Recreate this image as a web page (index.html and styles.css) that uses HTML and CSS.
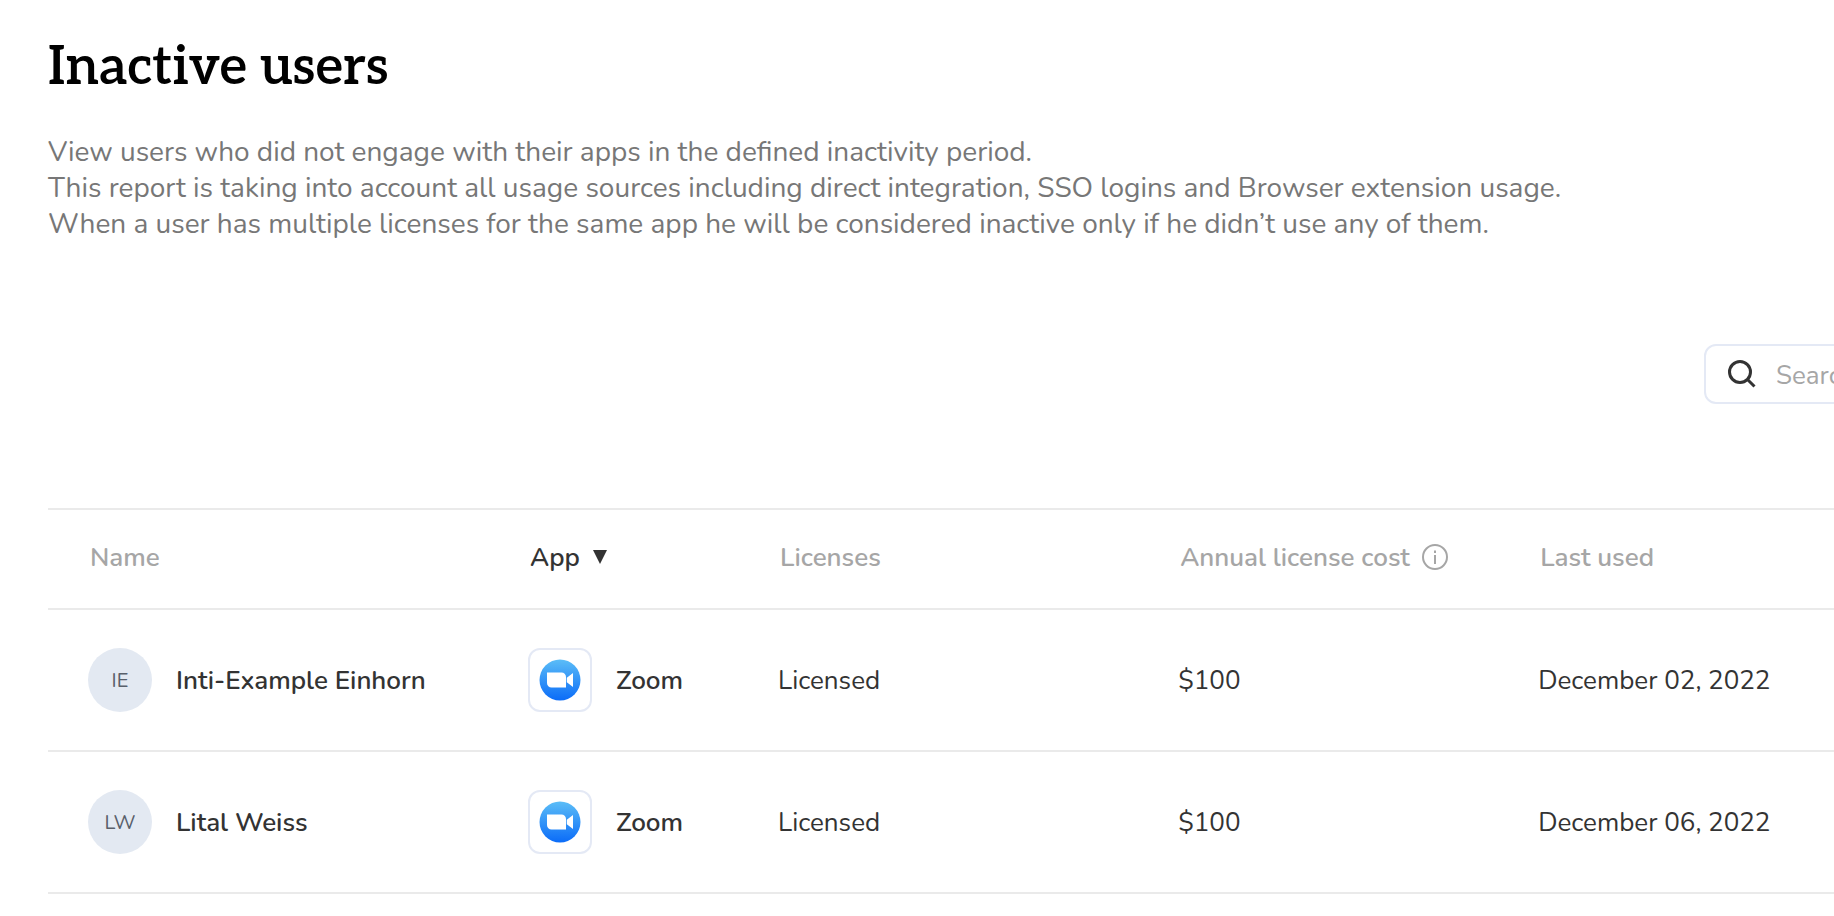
FILE: index.html
```html
<!DOCTYPE html>
<html lang="en">
<head>
<meta charset="utf-8">
<title>Inactive users</title>
<link rel="stylesheet" href="styles.css">
</head>
<body>
<svg class="defs" aria-hidden="true">
  <defs>
    <linearGradient id="zoom-blue" x1="0" y1="0" x2="0" y2="1">
      <stop offset="0" stop-color="#5bbdf7"/>
      <stop offset="1" stop-color="#0b6cf8"/>
    </linearGradient>
    <symbol id="zoom-logo" viewBox="0 0 42 42">
      <circle cx="21" cy="21" r="20.5" fill="url(#zoom-blue)"/>
      <path fill="#fff" d="M8 13.5h14.5a4.5 4.5 0 0 1 4.500 4.500v10.500h-14.500a4.500 4.500 0 0 1-4.500-4.500zM27.800 18.700l6.200-4.700v14l-6.200-4.700z"/>
    </symbol>
  </defs>
</svg>
<main class="page">
  <h1 class="title">Inactive users</h1>
  <p class="intro">View users who did not engage with their apps in the defined inactivity period.<br>This report is taking into account all usage sources including direct integration, SSO logins and Browser extension usage.<br>When a user has multiple licenses for the same app he will be considered inactive only if he didn’t use any of them.</p>
  <div class="toolbar">
    <label class="search">
      <svg class="search-icon" viewBox="0 0 28 28" aria-hidden="true"><circle cx="12" cy="12" r="10.500"/><path d="M19.500 19.500l7 7"/></svg>
      <input class="search-input" type="search" placeholder="Search" aria-label="Search">
    </label>
  </div>
  <table class="table">
    <colgroup><col class="col-name"><col class="col-app"><col class="col-licenses"><col class="col-cost"><col></colgroup>
    <thead>
      <tr>
        <th>Name</th>
        <th class="sorted" aria-sort="descending"><button class="sort" type="button">App <svg class="arrow" viewBox="0 0 14 14" aria-hidden="true"><path d="M0 0h14l-7 14z"/></svg></button></th>
        <th>Licenses</th>
        <th><span class="with-info">Annual license cost <svg class="info" viewBox="0 0 26 26" aria-hidden="true"><circle cx="13" cy="13" r="12"/><path d="M13 11v9M13 6.500v2.500"/></svg></span></th>
        <th>Last used</th>
      </tr>
    </thead>
    <tbody>
      <tr>
        <td><div class="cell"><span class="avatar">IE</span><span class="strong">Inti-Example Einhorn</span></div></td>
        <td><div class="cell"><span class="app-icon"><svg class="logo" aria-hidden="true"><use href="#zoom-logo"/></svg></span><span class="strong">Zoom</span></div></td>
        <td>Licensed</td>
        <td>$100</td>
        <td>December 02, 2022</td>
      </tr>
      <tr>
        <td><div class="cell"><span class="avatar">LW</span><span class="strong">Lital Weiss</span></div></td>
        <td><div class="cell"><span class="app-icon"><svg class="logo" aria-hidden="true"><use href="#zoom-logo"/></svg></span><span class="strong">Zoom</span></div></td>
        <td>Licensed</td>
        <td>$100</td>
        <td>December 06, 2022</td>
      </tr>
    </tbody>
  </table>
</main>
</body>
</html>
```

FILE: styles.css
```css
* {
  box-sizing: border-box;
}

body {
  margin: 0;
  background: #fff;
  color: #333;
  font-family: Nunito, Lato, sans-serif;
  font-size: 26px;
}

.defs {
  position: absolute;
  width: 0;
  height: 0;
}

.page {
  padding: 38px 0 0 48px;
  overflow: hidden;
}

.title {
  margin: 0;
  color: #000;
  font-family: Aleo, "DejaVu Serif", serif;
  font-size: 53px;
  font-weight: 600;
  line-height: 60px;
}

.intro {
  margin: 36px 0 0;
  color: #777;
  font-size: 28px;
  line-height: 36px;
}

.toolbar {
  display: flex;
  justify-content: flex-end;
  margin-top: 102px;
}

/* The search field runs past the right edge of the viewport. */
.search {
  display: flex;
  align-items: center;
  gap: 20px;
  flex: 0 0 500px;
  height: 60px;
  margin-right: -370px;
  padding: 0 22px;
  border: 2px solid #e4e9f5;
  border-radius: 12px;
}

.search-icon {
  width: 28px;
  height: 28px;
  fill: none;
  stroke: #333;
  stroke-width: 3;
}

.search-input {
  flex: 1;
  min-width: 0;
  padding: 2px 0 0;
  border: 0;
  outline: 0;
  background: none;
  color: #333;
  font: inherit;
}

.search-input::placeholder {
  color: #a6a6a6;
}

.table {
  width: 100%;
  margin-top: 104px;
  border-collapse: separate;
  border-spacing: 0;
  border-top: 2px solid #eaeaea;
  table-layout: fixed;
}

.col-name {
  width: 24.64%;
}

.col-app {
  width: 14%;
}

.col-licenses {
  width: 22.4%;
}

.col-cost {
  width: 20.16%;
}

th,
td {
  border-bottom: 2px solid #eaeaea;
  text-align: left;
  vertical-align: middle;
  white-space: nowrap;
}

th {
  height: 100px;
  padding: 0 0 4px 42px;
  color: #a6a6a6;
  font-weight: 600;
}

td {
  height: 142px;
  padding: 0 0 0 40px;
}

.sort {
  display: flex;
  align-items: center;
  gap: 13px;
  padding: 0;
  border: 0;
  background: none;
  color: #333;
  font: inherit;
}

.arrow {
  width: 14px;
  height: 14px;
  fill: #333;
}

.with-info {
  display: flex;
  align-items: center;
  gap: 12px;
}

.info {
  width: 26px;
  height: 26px;
  fill: none;
  stroke: #a6a6a6;
  stroke-width: 2;
}

.cell {
  display: flex;
  align-items: center;
  gap: 24px;
}

.strong {
  font-weight: 600;
}

.avatar,
.app-icon {
  display: flex;
  align-items: center;
  justify-content: center;
  width: 64px;
  height: 64px;
}

.avatar {
  border-radius: 50%;
  background: #e3e9f2;
  color: #59606b;
  font-size: 20px;
}

.app-icon {
  border: 2px solid #e4e9f5;
  border-radius: 12px;
}

.logo {
  width: 42px;
  height: 42px;
}
```
